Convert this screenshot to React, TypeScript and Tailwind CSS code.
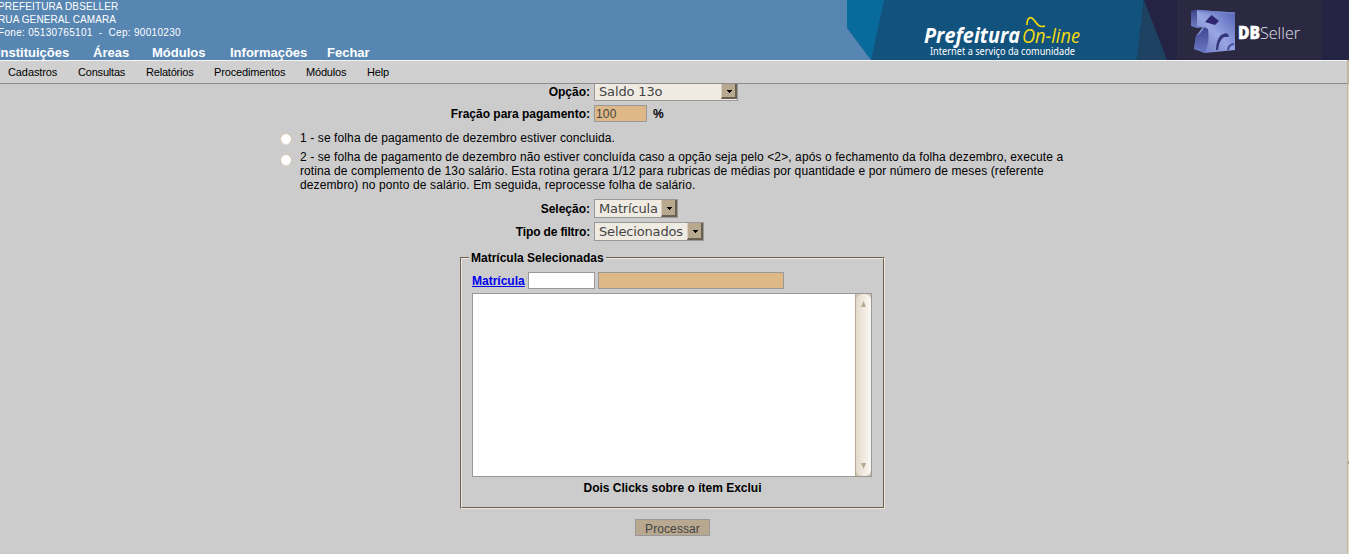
import type { ReactNode } from "react";

const modules = [
  { label: "Instituições", place: "-ml-[3px] w-[96px]" },
  { label: "Áreas", place: "w-[59px]" },
  { label: "Módulos", place: "w-[78px]" },
  { label: "Informações", place: "w-[97px]" },
  { label: "Fechar", place: "w-[60px]" },
];

const menu = [
  { label: "Cadastros", place: "w-[70px] tracking-[-0.1px]" },
  { label: "Consultas", place: "w-[68px] tracking-[-0.2px]" },
  { label: "Relatórios", place: "w-[68px] tracking-[-0.2px]" },
  { label: "Procedimentos", place: "w-[92px] tracking-[-0.15px]" },
  { label: "Módulos", place: "w-[61px] tracking-[-0.2px]" },
  { label: "Help", place: "w-[40px] tracking-[-0.2px]" },
];

function Banner() {
  return (
    <svg className="block h-[60px] w-[502px] shrink-0" viewBox="0 0 502 60">
      <defs>
        <linearGradient id="front" x1="0" y1="1" x2="1" y2="0">
          <stop offset="0" stopColor="#6573bd" />
          <stop offset="0.5" stopColor="#98a6e2" />
          <stop offset="1" stopColor="#5060b4" />
        </linearGradient>
        <linearGradient id="side" x1="0" y1="0" x2="0" y2="1">
          <stop offset="0" stopColor="#3b4384" />
          <stop offset="1" stopColor="#7080c4" />
        </linearGradient>
        <linearGradient id="base" x1="0" y1="0" x2="0" y2="1">
          <stop offset="0" stopColor="#3d4590" />
          <stop offset="1" stopColor="#6c79c2" />
        </linearGradient>
      </defs>
      <rect width="502" height="60" fill="#12537d" />
      <path d="M0 0H37L24 60L0 28Z" fill="#086b9b" />
      <path d="M0 28L24 60H0Z" fill="#5786b2" />
      <path d="M297 0H502V60H290Z" fill="#252344" />
      <path d="M297 0L320 60H290Z" fill="#1e4262" />
      <rect x="330" width="145" height="60" fill="#2b2842" />
      <path d="M344 11L350 9.500L360 11V27L350 28L344 26Z" fill="url(#side)" />
      <path d="M350 10L388 12.500V50L358 53L347 49L349 36L356 27L350 26Z" fill="url(#front)" />
      <path d="M349 36Q355 33 357 27L361 29Q363 42 358 53L347 49Z" fill="url(#base)" />
      <path d="M358 22L364.500 15L372 21L368 25Z" fill="#30256f" />
      <path d="M350 10L388 12.500V14L352 12Z" fill="#7482ca" />
      <path d="M369 50Q369 40 374 35L379 33L382 35L381 37L377 37Q372 40 371 50Z" fill="#34367a" />
      <path d="M380 50Q380 44 387 43V45Q383 45 382 50Z" fill="#454e98" />
      <text x="77" y="43" textLength="96" lengthAdjust="spacingAndGlyphs" className="fill-white font-['Open_Sans',sans-serif] text-[20.500px] font-bold italic">Prefeitura</text>
      <text x="175" y="43" textLength="58" lengthAdjust="spacingAndGlyphs" className="fill-[#f2db0b] font-['Open_Sans',sans-serif] text-[20.500px] italic">On-line</text>
      <path d="M180 25C180 17 184 16 187 20S192 28 198 26" fill="none" stroke="#f2db0b" strokeWidth="1.7" />
      <text x="83" y="55" textLength="145" lengthAdjust="spacingAndGlyphs" className="fill-white font-['Noto_Sans',sans-serif] text-[10px]">Internet a serviço da comunidade</text>
      <text x="391" y="39" textLength="22" lengthAdjust="spacingAndGlyphs" className="fill-white stroke-white stroke-[0.5px] font-['Open_Sans',sans-serif] text-[17px] font-extrabold">DB</text>
      <text x="413" y="39" textLength="40" lengthAdjust="spacingAndGlyphs" className="fill-[#e4e2ee] font-['Open_Sans',sans-serif] text-[17px] font-light">Seller</text>
    </svg>
  );
}

function Row({ label, className, children }: { label: ReactNode; className: string; children: ReactNode }) {
  return (
    <div className={`flex items-center gap-1 ${className}`}>
      <label className="w-[590px] shrink-0 text-right font-bold">{label}</label>
      {children}
    </div>
  );
}

function Select({ value, className }: { value: string; className: string }) {
  return (
    <button className={`flex items-stretch border border-[#999] bg-[#efebe3] text-left font-['DejaVu_Sans',sans-serif] text-[13px] text-[#444] ${className}`}>
      <span className="flex-1 self-center pl-1 leading-[15px] tracking-[-0.15px]">{value}</span>
      <span className="flex w-4 items-center justify-center border-r-2 border-b-2 border-l border-r-[#6b6152] border-b-[#6b6152] border-l-[#d8cebf] bg-[#b8a88f] pt-px pl-px">
        <svg className="h-[3px] w-[5px]" viewBox="0 0 5 3"><path d="M0 0H5V1H4V2H3V3H2V2H1V1H0Z" fill="#000" shapeRendering="crispEdges" /></svg>
      </span>
    </button>
  );
}

function Radio({ className }: { className: string }) {
  return <span role="radio" aria-checked="false" className={`h-3 w-3 shrink-0 rounded-full border border-[#d3c5af] border-b-[#e4ddd2] bg-white ${className}`} />;
}

export default function App() {
  return (
    <div className="flex h-[554px] w-[1349px] flex-col overflow-hidden bg-[#ccc] font-['Liberation_Sans',sans-serif] text-[12px] leading-[14px] text-black">
      <header className="flex h-[60px] shrink-0 bg-[#5786b2] text-white">
        <div className="flex w-[847px] flex-col">
          <div className="-ml-[2px] h-[45px] text-[10px] leading-[13px] whitespace-pre">
            <p className="tracking-[0.13px]">PREFEITURA DBSELLER</p>
            <p className="tracking-[0.1px]">RUA GENERAL CAMARA</p>
            <p className="tracking-[0.3px]">{"Fone: 05130765101  -  Cep: 90010230"}</p>
          </div>
          <nav className="flex text-[13px] leading-[15px] font-bold">
            {modules.map((m) => (
              <a key={m.label} className={`shrink-0 ${m.place}`}>{m.label}</a>
            ))}
          </nav>
        </div>
        <Banner />
      </header>
      <div className="flex min-h-0 flex-1">
        <div className="flex w-[1347px] flex-col">
          <nav className="flex h-6 shrink-0 items-center border-t border-b border-t-[#f4f4f4] border-b-[#8c8c8c] bg-[#d0d0d0] pl-2 text-[11px]">
            {menu.map((m) => (
              <a key={m.label} className={`shrink-0 ${m.place}`}>{m.label}</a>
            ))}
          </nav>
          <main className="flex flex-col">
            <Row label="Opção:" className="h-[17px] pb-px">
              <Select value="Saldo 13o" className="mt-px h-[17px] w-[144px] border-t-0 pb-px" />
            </Row>
            <Row label="Fração para pagamento:" className="mt-1 h-[17px]">
              <span className="flex h-[17px] w-[53px] items-center border border-[#999] bg-[#deb887] pl-px tracking-[0.2px] text-[#444]">100</span>
              <b className="ml-[2px]">%</b>
            </Row>
            <div className="mt-[9px] flex pl-[280px]">
              <Radio className="mt-[2px]" />
              <p className="ml-2 tracking-[0.11px]">1 - se folha de pagamento de dezembro estiver concluida.</p>
            </div>
            <div className="mt-[5px] flex pl-[280px]">
              <Radio className="mt-1" />
              <p className="ml-2 tracking-[0.1px] whitespace-nowrap">
                2 - se folha de pagamento de dezembro não estiver concluída caso a opção seja pelo &lt;2&gt;, após o fechamento da folha dezembro, execute a<br />
                rotina de complemento de 13o salário. Esta rotina gerara 1/12 para rubricas de médias por quantidade e por número de meses (referente<br />
                <span className="tracking-[0.12px]">dezembro) no ponto de salário. Em seguida, reprocesse folha de salário.</span>
              </p>
            </div>
            <Row label="Seleção:" className="mt-[7px] h-[19px]">
              <Select value="Matrícula" className="h-[19px] w-[84px]" />
            </Row>
            <Row label={<span className="tracking-[-0.15px]">Tipo de filtro:</span>} className="mt-1 h-[19px]">
              <Select value="Selecionados" className="h-[19px] w-[110px]" />
            </Row>
            <section className="mt-[10px] ml-[460px] flex h-[258px] w-[425px] flex-col">
              <div className="flex h-[14px] shrink-0 items-start">
                <div className="mt-[6px] h-2 w-[9px] border-t border-l border-[#6b6152]"><div className="h-full border-t border-l border-[#efe8dc]" /></div>
                <h2 className="px-[2px] font-bold whitespace-nowrap">Matrícula Selecionadas</h2>
                <div className="mt-[6px] h-2 flex-1 border-t border-r border-t-[#6b6152] border-r-[#efe8dc]"><div className="h-full border-t border-r border-t-[#efe8dc] border-r-[#6b6152]" /></div>
              </div>
              <div className="flex min-h-0 flex-1 border-r border-b border-l border-r-[#efe8dc] border-b-[#efe8dc] border-l-[#6b6152]">
                <div className="flex-1 border-r border-b border-l border-r-[#6b6152] border-b-[#6b6152] border-l-[#efe8dc] pl-[10px]">
                  <div className="flex h-7 items-start pt-[7px]">
                    <a className="mt-[2px] w-[56px] font-bold text-[#0000ee] underline">Matrícula</a>
                    <span className="h-[17px] w-[67px] border border-[#999] bg-white" />
                    <span className="ml-[3px] h-[17px] w-[186px] border border-[#999] bg-[#deb887]" />
                  </div>
                  <div className="flex h-[184px] w-[400px] border border-[#999] bg-white">
                    <div className="flex-1" />
                    <div className="w-4 border-l border-[#b8a88f] bg-[#cfc3ad]">
                      <div className="flex h-full flex-col items-center justify-between rounded-[6px] bg-linear-to-r from-[#e3d9c9] to-[#fbf9f5] pt-[7px] pb-[7px]">
                        <svg className="h-[6px] w-[5px]" viewBox="0 0 5 6"><path d="M2.5 0L5 6H0Z" fill="#b8a88f" /></svg>
                        <svg className="h-[6px] w-[5px]" viewBox="0 0 5 6"><path d="M0 0H5L2.5 6Z" fill="#b8a88f" /></svg>
                      </div>
                    </div>
                  </div>
                  <p className="mt-1 w-[401px] text-center font-bold">Dois Clicks sobre o ítem Exclui</p>
                </div>
              </div>
            </section>
            <button className="mt-[10px] ml-[635px] flex h-[17px] w-[75px] items-center justify-center border border-[#999] bg-[#b8a88f] pt-[3px] text-[#444]">
              <span className="tracking-[0.1px]">Processar</span>
            </button>
          </main>
        </div>
        <div className="flex w-[2px] flex-col border-l border-[#c2b49d] bg-[#e7dac8]">
          <div className="h-[25px] bg-[#c8b89b]" />
          <div className="h-[376px] bg-[#e8ddcd]" />
          <div className="h-[3px] bg-[#a89880]" />
        </div>
      </div>
    </div>
  );
}
